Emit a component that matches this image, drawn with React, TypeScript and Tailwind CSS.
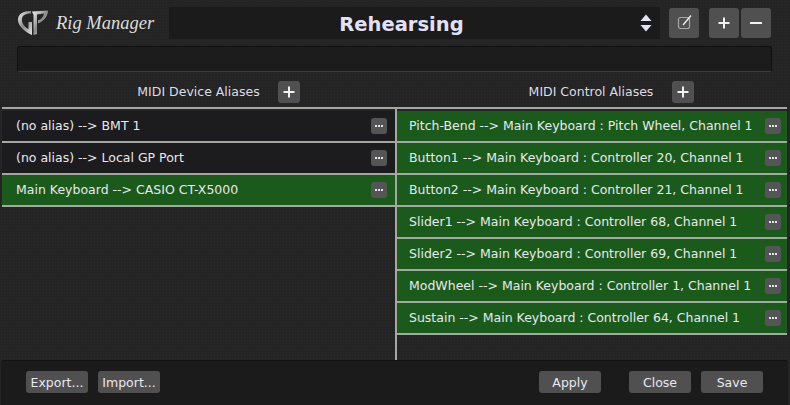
const FONT = "font-['DejaVu_Sans',Verdana,sans-serif]";

const DEVICE_ALIASES = [
  { text: "(no alias) --> BMT 1", active: false },
  { text: "(no alias) --> Local GP Port", active: false },
  { text: "Main Keyboard --> CASIO CT-X5000", active: true },
];

const CONTROL_ALIASES = [
  "Pitch-Bend --> Main Keyboard : Pitch Wheel, Channel 1",
  "Button1 --> Main Keyboard : Controller 20, Channel 1",
  "Button2 --> Main Keyboard : Controller 21, Channel 1",
  "Slider1 --> Main Keyboard : Controller 68, Channel 1",
  "Slider2 --> Main Keyboard : Controller 69, Channel 1",
  "ModWheel --> Main Keyboard : Controller 1, Channel 1",
  "Sustain --> Main Keyboard : Controller 64, Channel 1",
];

function Logo() {
  return (
    <svg width="32" height="26" viewBox="0 0 32 26" fill="none" className="shrink-0">
      <defs>
        <linearGradient id="chrome" x1="0" y1="0" x2="1" y2="1">
          <stop offset="0" stopColor="#f8f8f8" />
          <stop offset="0.5" stopColor="#8a8a8a" />
          <stop offset="1" stopColor="#e8e8e8" />
        </linearGradient>
      </defs>
      <path d="M14 1C6 1 1 4 1 10C1 16 8 22 15 25L15 12L11.500 12L11.500 19C7.500 17 4.500 13 5 9C5.500 5 9 3.500 14 3.500Z" fill="url(#chrome)" />
      <path d="M15 1.500L31 0.500C31 6 27 11 21 13.500L21 10.500C24 9.500 26.500 7 27 3.500L20 4.500L20 24L16.500 25L16.500 5Z" fill="url(#chrome)" />
    </svg>
  );
}

function ToolButton({ children }: { children: React.ReactNode }) {
  return (
    <button className="w-[30px] h-[30px] rounded-[3px] bg-[#505050] flex items-center justify-center shrink-0">
      {children}
    </button>
  );
}

function PlusIcon() {
  return (
    <svg width="12" height="12" viewBox="0 0 12 12">
      <path d="M6 0.5V11.5M0.5 6H11.5" stroke="#f2f2f6" strokeWidth="2" />
    </svg>
  );
}

function AddButton() {
  return (
    <button className="w-[22px] h-[22px] rounded-[3px] bg-[#505050] flex items-center justify-center">
      <PlusIcon />
    </button>
  );
}

function DotsButton() {
  return (
    <button className="w-4 h-4 rounded-[3px] bg-[#555555] flex items-center justify-center gap-px shrink-0">
      <span className="w-[2px] h-[2px] bg-[#e6e6ea]" />
      <span className="w-[2px] h-[2px] bg-[#e6e6ea]" />
      <span className="w-[2px] h-[2px] bg-[#e6e6ea]" />
    </button>
  );
}

function AliasRow({ text, active, inset }: { text: string; active: boolean; inset: string }) {
  return (
    <div className="border-b-2 border-[#a5a8a2]">
      <div
        className={`h-[30px] flex items-center justify-between ${inset} text-[12.5px] text-[#e8e8f0] ${
          active ? "bg-[#1a5a1b]" : "bg-[#1c1c1e]"
        }`}
      >
        <span className="whitespace-nowrap">{text}</span>
        <DotsButton />
      </div>
    </div>
  );
}

function FooterButton({ label }: { label: string }) {
  return (
    <button className="w-[62px] h-[22px] rounded-[3px] bg-[#505050] pt-[2px] text-[12.5px] leading-none text-[#e8e8f0]">
      {label}
    </button>
  );
}

export default function App() {
  return (
    <div
      className={`${FONT} w-[790px] h-[405px] overflow-hidden flex flex-col bg-[#242424] bg-[radial-gradient(#292929_1px,transparent_1px)] bg-[length:3px_3px]`}
    >
      {/* top bar */}
      <div className="flex items-center h-[32px] mt-[7px] pl-[17px] pr-[19px]">
        <div className="w-[152px] flex items-center gap-[7px] shrink-0">
          <Logo />
          <span className="font-['Liberation_Serif',serif] italic text-[18.5px] leading-none text-[#dcdcdc] whitespace-nowrap">
            Rig Manager
          </span>
        </div>
        <div className="w-[491px] h-[32px] bg-[#1b1b1b] relative flex items-center justify-center pr-[26px] pt-[4px] shrink-0">
          <span className="font-bold text-[19.5px] text-[#e2e2f6]">Rehearsing</span>
          <svg width="12" height="18" viewBox="0 0 12 18" className="absolute right-[8px] top-[7px]">
            <path d="M6 0.5L11.5 7H0.5Z M0.5 11H11.5L6 17.5Z" fill="#e2e2f6" />
          </svg>
        </div>
        <div className="ml-[9px] flex">
          <ToolButton>
            <svg width="18" height="18" viewBox="0 0 18 18" fill="none">
              <rect x="3.500" y="3.500" width="11" height="11" rx="2" stroke="#a8a8a8" strokeWidth="1.200" />
              <path d="M8 11L16 1.500" stroke="#ececec" strokeWidth="1.400" />
            </svg>
          </ToolButton>
        </div>
        <div className="ml-[10px] flex gap-[2px]">
          <ToolButton>
            <PlusIcon />
          </ToolButton>
          <ToolButton>
            <svg width="12" height="12" viewBox="0 0 12 12">
              <path d="M0 6H12" stroke="#f2f2f6" strokeWidth="2" />
            </svg>
          </ToolButton>
        </div>
      </div>

      {/* status field */}
      <div className="ml-[17px] mr-[18px] mt-[7px] h-[26px] rounded-[3px] bg-[#1c1c1c] border border-[#0f0f0f] border-b-[#3c3c3c]" />

      {/* section headers */}
      <div className="flex h-[23px] mt-[8px] pl-[2px] pr-[3px] text-[12.5px] text-[#dcdce6]">
        <div className="w-[393px] flex items-center justify-center gap-[18px] pl-[40px]">
          <span className="pt-[2px]">MIDI Device Aliases</span>
          <AddButton />
        </div>
        <div className="flex-1 flex items-center justify-center gap-[19px] pl-[41px]">
          <span className="pt-[2px]">MIDI Control Aliases</span>
          <AddButton />
        </div>
      </div>

      {/* lists */}
      <div className="flex-1 flex mt-[4px] ml-[2px] mr-[3px] border-t-2 border-[#a5a8a2] min-h-0">
        <div className="w-[393px] pt-[2px]">
          {DEVICE_ALIASES.map((row) => (
            <AliasRow key={row.text} text={row.text} active={row.active} inset="pl-[14px] pr-[8px]" />
          ))}
        </div>
        <div className="flex-1 pt-[2px] border-l-2 border-[#a5a8a2]">
          {CONTROL_ALIASES.map((text) => (
            <AliasRow key={text} text={text} active inset="pl-[12px] pr-[6px]" />
          ))}
        </div>
      </div>

      {/* footer */}
      <div className="h-[45px] ml-[1px] mr-[2px] rounded-t-[3px] bg-[#1b1b1b] border-t border-[#111111] flex items-start pt-[10px] pl-[25px] pr-[25px]">
        <div className="flex gap-[10px]">
          <FooterButton label="Export..." />
          <FooterButton label="Import..." />
        </div>
        <div className="ml-auto flex">
          <FooterButton label="Apply" />
          <div className="ml-[28px] flex gap-[10px]">
            <FooterButton label="Close" />
            <FooterButton label="Save" />
          </div>
        </div>
      </div>
    </div>
  );
}
